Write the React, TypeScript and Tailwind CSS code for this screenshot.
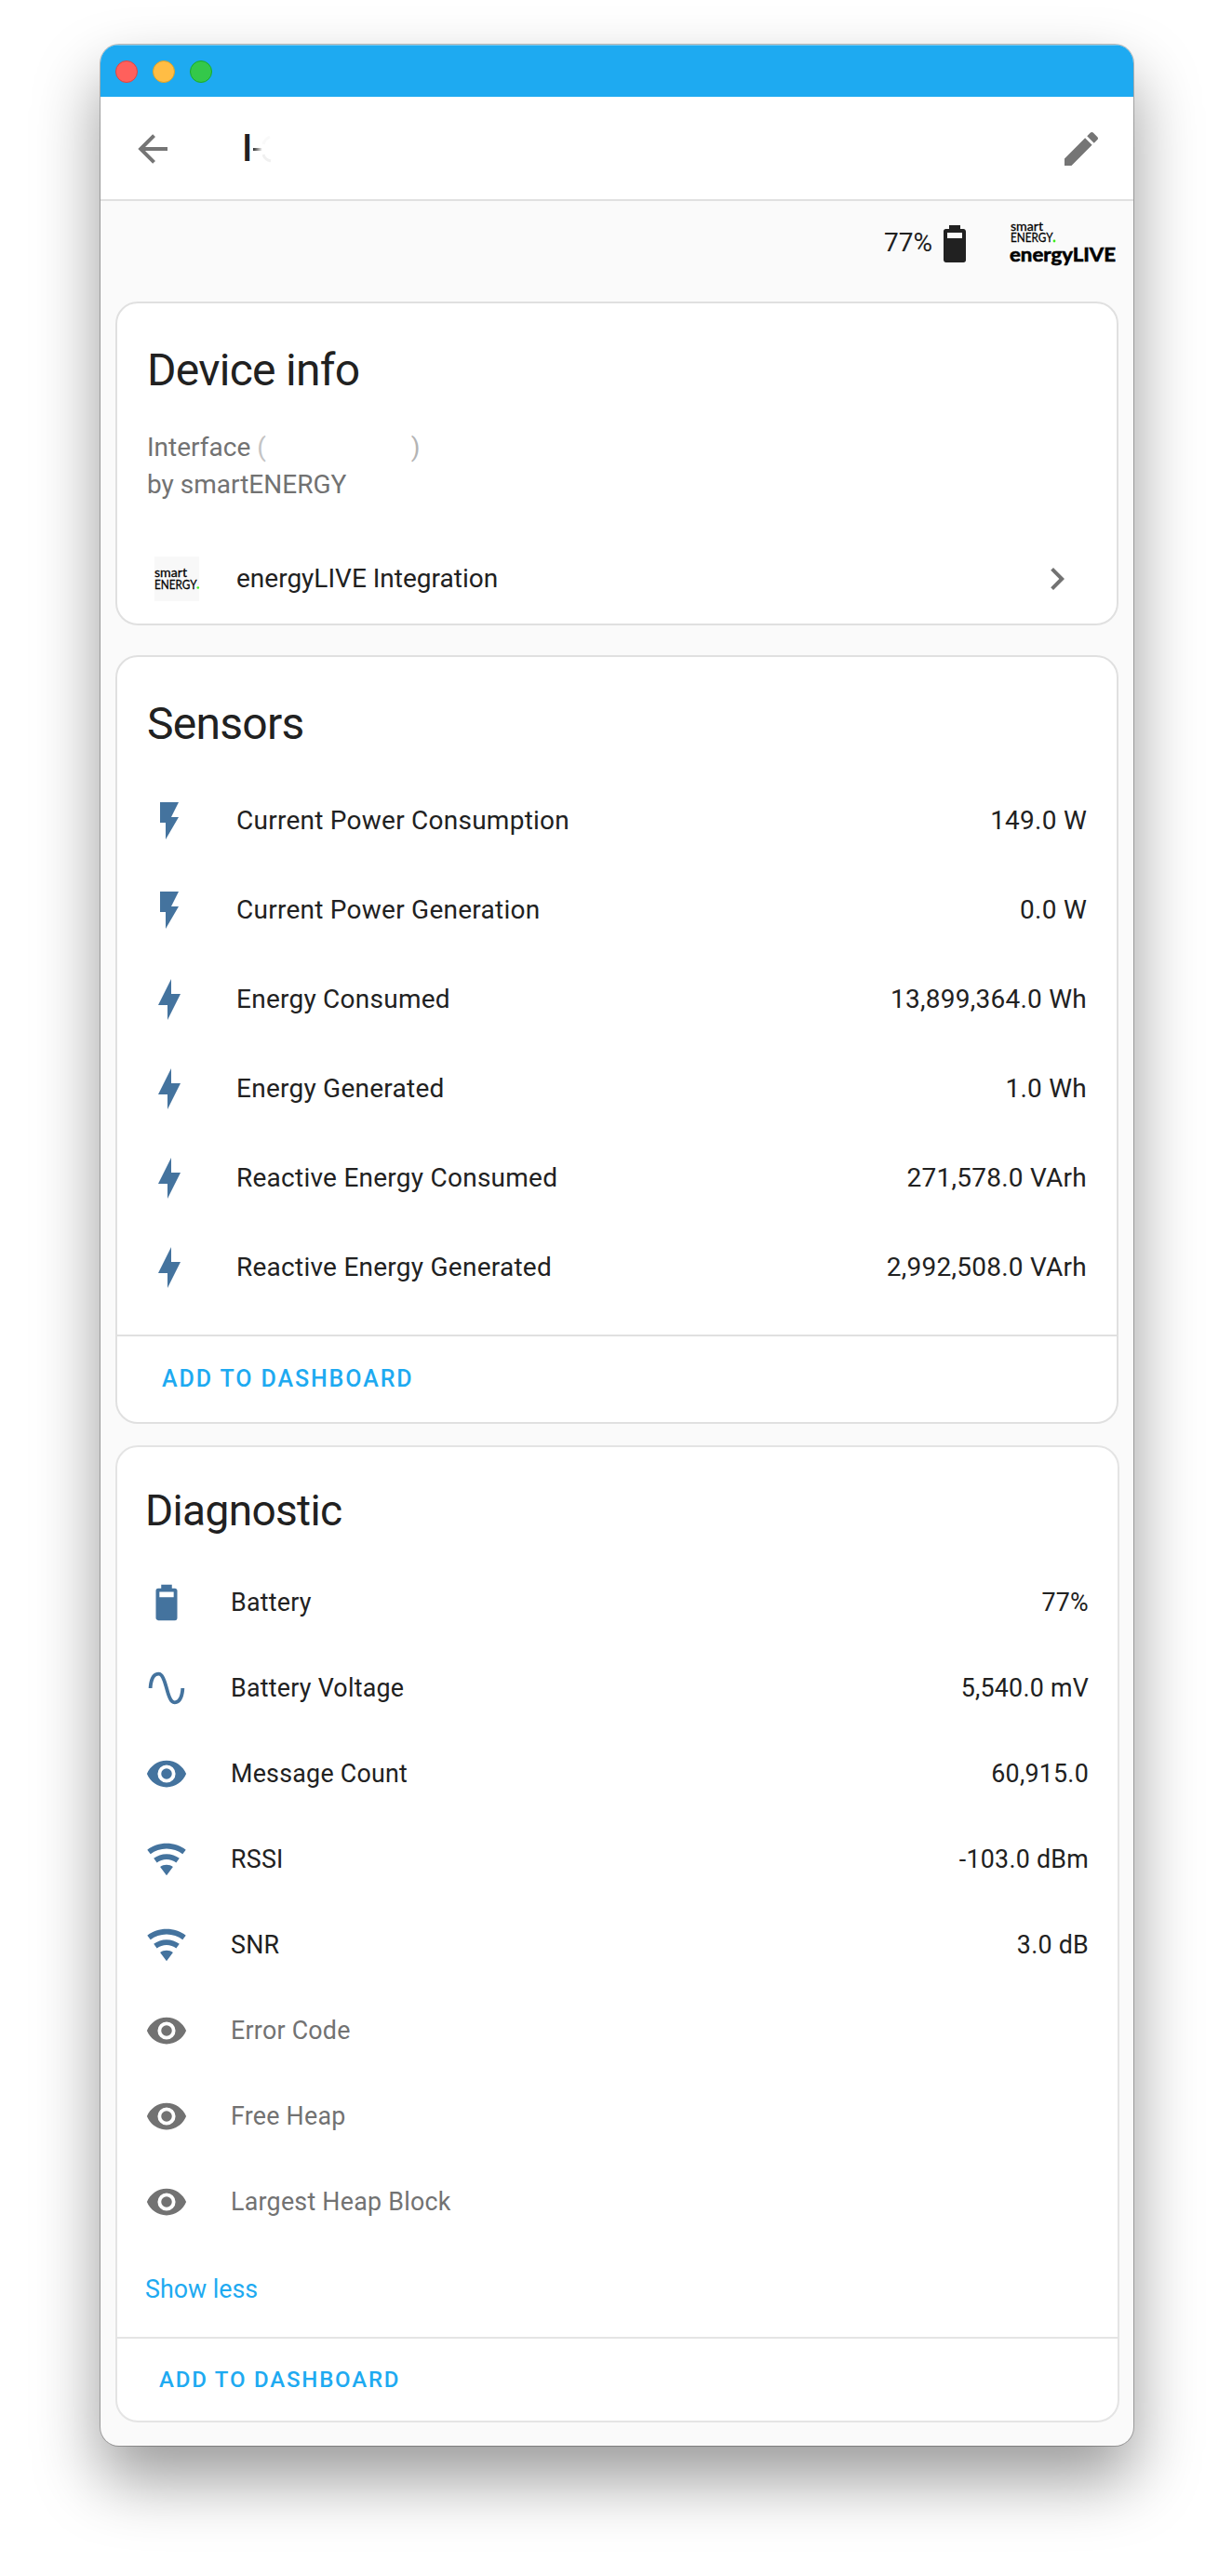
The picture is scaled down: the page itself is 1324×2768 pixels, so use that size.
import React from "react";

const ICONS = {
  back: "M20,11V13H8L13.5,18.5L12.08,19.92L4.16,12L12.08,4.08L13.5,5.5L8,11H20Z",
  pencil:
    "M20.71,7.04C21.1,6.65 21.1,6 20.71,5.63L18.37,3.29C18,2.9 17.35,2.9 16.96,3.29L15.12,5.12L18.87,8.87M3,17.25V21H6.75L17.81,9.93L14.06,6.18L3,17.25Z",
  battery:
    "M16,9H8V6H16M16.67,4H15V2H9V4H7.33A1.33,1.33 0 0,0 6,5.33V20.67C6,21.4 6.6,22 7.33,22H16.67A1.33,1.33 0 0,0 18,20.67V5.33C18,4.6 17.4,4 16.67,4Z",
  chevron: "M8.59,16.58L13.17,12L8.59,7.41L10,6L16,12L10,18L8.59,16.58Z",
  flash: "M7,2V13H10V22L17,10H13L17,2H7Z",
  bolt: "M11 15H6L13 1V9H18L11 23V15Z",
  sine:
    "M16.5,21C13.5,21 12.31,16.76 11.05,12.28C10.14,9.04 9,5 7.5,5C4.11,5 4,11.93 4,12H2C2,11.63 2.06,3 7.5,3C10.5,3 11.71,7.25 12.97,11.74C13.83,14.8 15,19 16.5,19C19.94,19 20.03,12.07 20.03,12H22.03C22.03,12.37 21.97,21 16.5,21Z",
  eye: "M12,9A3,3 0 0,0 9,12A3,3 0 0,0 12,15A3,3 0 0,0 15,12A3,3 0 0,0 12,9M12,17A5,5 0 0,1 7,12A5,5 0 0,1 12,7A5,5 0 0,1 17,12A5,5 0 0,1 12,17M12,4.5C7,4.5 2.73,7.61 1,12C2.73,16.39 7,19.5 12,19.5C17,19.5 21.27,16.39 23,12C21.27,7.61 17,4.5 12,4.5Z",
  wifi: "M12,21L15.6,16.2C14.6,15.45 13.35,15 12,15C10.65,15 9.4,15.45 8.4,16.2L12,21M12,3C7.95,3 4.21,4.34 1.2,6.6L3,9C5.5,7.12 8.62,6 12,6C15.38,6 18.5,7.12 21,9L22.8,6.6C19.79,4.34 16.05,3 12,3M12,9C9.3,9 6.81,9.89 4.8,11.4L6.6,13.8C8.1,12.67 9.97,12 12,12C14.03,12 15.9,12.67 17.4,13.8L19.2,11.4C17.19,9.89 14.7,9 12,9Z",
};

type IconName = keyof typeof ICONS;

function Icon({ name, className }: { name: IconName; className: string }) {
  return (
    <svg viewBox="0 0 24 24" fill="currentColor" className={`shrink-0 ${className}`}>
      <path d={ICONS[name]} />
    </svg>
  );
}

const sensors: { icon: IconName; name: string; value: string }[] = [
  { icon: "flash", name: "Current Power Consumption", value: "149.0 W" },
  { icon: "flash", name: "Current Power Generation", value: "0.0 W" },
  { icon: "bolt", name: "Energy Consumed", value: "13,899,364.0 Wh" },
  { icon: "bolt", name: "Energy Generated", value: "1.0 Wh" },
  { icon: "bolt", name: "Reactive Energy Consumed", value: "271,578.0 VArh" },
  { icon: "bolt", name: "Reactive Energy Generated", value: "2,992,508.0 VArh" },
];

const diagnostics: { icon: IconName; name: string; value?: string }[] = [
  { icon: "battery", name: "Battery", value: "77%" },
  { icon: "sine", name: "Battery Voltage", value: "5,540.0 mV" },
  { icon: "eye", name: "Message Count", value: "60,915.0" },
  { icon: "wifi", name: "RSSI", value: "-103.0 dBm" },
  { icon: "wifi", name: "SNR", value: "3.0 dB" },
  { icon: "eye", name: "Error Code" },
  { icon: "eye", name: "Free Heap" },
  { icon: "eye", name: "Largest Heap Block" },
];

function BrandLogo() {
  return (
    <svg width="116" height="52" viewBox="0 0 116 52" className="shrink-0 overflow-visible" fontFamily="Lato, sans-serif">
      <text x="1" y="11" fontSize="14" textLength="35" lengthAdjust="spacingAndGlyphs" stroke="#000" strokeWidth="0.3">smart</text>
      <text x="1" y="23" fontSize="14" textLength="45.5" lengthAdjust="spacingAndGlyphs" stroke="#000" strokeWidth="0.3">ENERGY</text>
      <circle cx="48" cy="22" r="1.4" fill="#3df01e" />
      <text x="0" y="44" fontSize="20" fontWeight="700" textLength="114" lengthAdjust="spacingAndGlyphs" stroke="#000" strokeWidth="0.6">energyLIVE</text>
    </svg>
  );
}

function BrandIcon() {
  return (
    <svg width="48" height="48" viewBox="0 0 48 48" className="shrink-0 overflow-visible bg-[#f8f8f8]" fontFamily="Lato, sans-serif">
      <text x="0" y="21.5" fontSize="14" textLength="35" lengthAdjust="spacingAndGlyphs" stroke="#000" strokeWidth="0.3">smart</text>
      <text x="0" y="34.5" fontSize="14" textLength="45.5" lengthAdjust="spacingAndGlyphs" stroke="#000" strokeWidth="0.3">ENERGY</text>
      <circle cx="46.8" cy="33.5" r="1.3" fill="#3df01e" />
    </svg>
  );
}

export default function App() {
  return (
    <div className="h-[2768px] w-[1324px] overflow-hidden bg-white pt-12 pl-[108px] font-['Roboto',sans-serif] text-[28px] leading-10 text-[#212121]">
      <div className="flex h-[2580px] w-[1110px] flex-col overflow-hidden rounded-[20px] bg-[#fafafa] shadow-[0_0_0_1px_rgba(0,0,0,0.25),0_36px_70px_rgba(0,0,0,0.4)]">
        <div className="flex h-14 shrink-0 items-center gap-4 border-t border-[#7cc9ee] bg-[#1eaaf1] pl-4">
          <span className="size-6 rounded-full border border-[#e0443e] bg-[#ff605c]" />
          <span className="size-6 rounded-full border border-[#dea123] bg-[#ffbd44]" />
          <span className="size-6 rounded-full border border-[#1aab29] bg-[#34c84a]" />
        </div>

        <header className="flex h-28 shrink-0 items-center border-b-2 border-[#e0e0e0] bg-white px-8 pt-0.5 text-[#757575]">
          <Icon name="back" className="size-12" />
          <div className="ml-[72px] flex grow items-center text-[40px] text-[#212121]">
            <span className="font-medium">I</span>
            <span className="bg-linear-to-r from-[#212121] to-[#fff] bg-clip-text text-transparent">-</span>
            <svg width="14" height="32" viewBox="0 0 14 32" fill="none" stroke="#f0f0f0" strokeWidth="3">
              <path d="M8 3C4 5 2 7 1 11" opacity="0.4" />
              <path d="M1 22C2 26 5 28 9 29" />
            </svg>
          </div>
          <Icon name="pencil" className="size-12" />
        </header>

        <div className="flex h-[108px] shrink-0 items-start justify-end pt-[22px] pr-[17px]">
          <span className="mt-[3px]">77%</span>
          <Icon name="battery" className="size-12" />
          <div className="mt-[-1px] ml-[35px]">
            <BrandLogo />
          </div>
        </div>

        <section className="mx-4 h-[348px] shrink-0 rounded-3xl border-2 border-[#e0e0e0] bg-white px-8">
          <h2 className="pt-[40px] text-[48px] leading-[64px] tracking-[-0.015em]">Device info</h2>
          <div className="mt-[31px] text-[#727272]">
            <p className="flex">
              Interface&nbsp;<span className="text-[#c4c4c4]">(</span>
              <span className="ml-[156px] text-[#b4b4b4]">)</span>
            </p>
            <p>by smartENERGY</p>
          </div>
          <div className="mt-[57px] flex items-center pr-2 pl-2">
            <BrandIcon />
            <span className="ml-10 grow">energyLIVE Integration</span>
            <Icon name="chevron" className="size-12 text-[#727272]" />
          </div>
        </section>

        <section className="mx-4 mt-8 h-[826px] shrink-0 rounded-3xl border-2 border-[#e0e0e0] bg-white">
          <h2 className="px-8 pt-[40px] text-[48px] leading-[64px] tracking-[-0.015em]">Sensors</h2>
          <ul className="mt-[24px] px-8 tracking-[0.25px]">
            {sensors.map((s) => (
              <li key={s.name} className="flex h-24 items-center">
                <Icon name={s.icon} className="size-12 text-[#44739e]" />
                <span className="ml-12 grow">{s.name}</span>
                <span>{s.value}</span>
              </li>
            ))}
          </ul>
          <div className="mt-[24px] border-t-2 border-[#e0e0e0] pt-[26px] pl-12 text-[25px] font-medium tracking-[0.076em] text-[#1eaaf1]">
            ADD TO DASHBOARD
          </div>
        </section>

        <section className="mr-[15px] ml-4 mt-[23px] h-[1050px] shrink-0 rounded-3xl border-2 border-[#e4e4e4] bg-white text-[26.8px]">
          <h2 className="pt-[38px] pl-[30px] text-[46px] leading-[60px] tracking-[-0.014em]">Diagnostic</h2>
          <ul className="mt-[23px] pr-[31px] pl-[30px] tracking-[0.25px]">
            {diagnostics.map((d) => (
              <li key={d.name} className={`flex h-[92px] items-center ${d.value ? "" : "text-[#727272]"}`}>
                <Icon name={d.icon} className={`size-[46px] ${d.value ? "text-[#44739e]" : "text-[#727272]"}`} />
                <span className="ml-[46px] grow">{d.name}</span>
                <span>{d.value}</span>
              </li>
            ))}
          </ul>
          <p className="mt-[28px] pl-[30px] text-[#1eaaf1]">Show less</p>
          <div className="mt-[31px] border-t-2 border-[#e4e4e4] pt-[24px] pl-[45px] text-[24px] font-medium tracking-[0.075em] text-[#1eaaf1]">
            ADD TO DASHBOARD
          </div>
        </section>
      </div>
    </div>
  );
}
